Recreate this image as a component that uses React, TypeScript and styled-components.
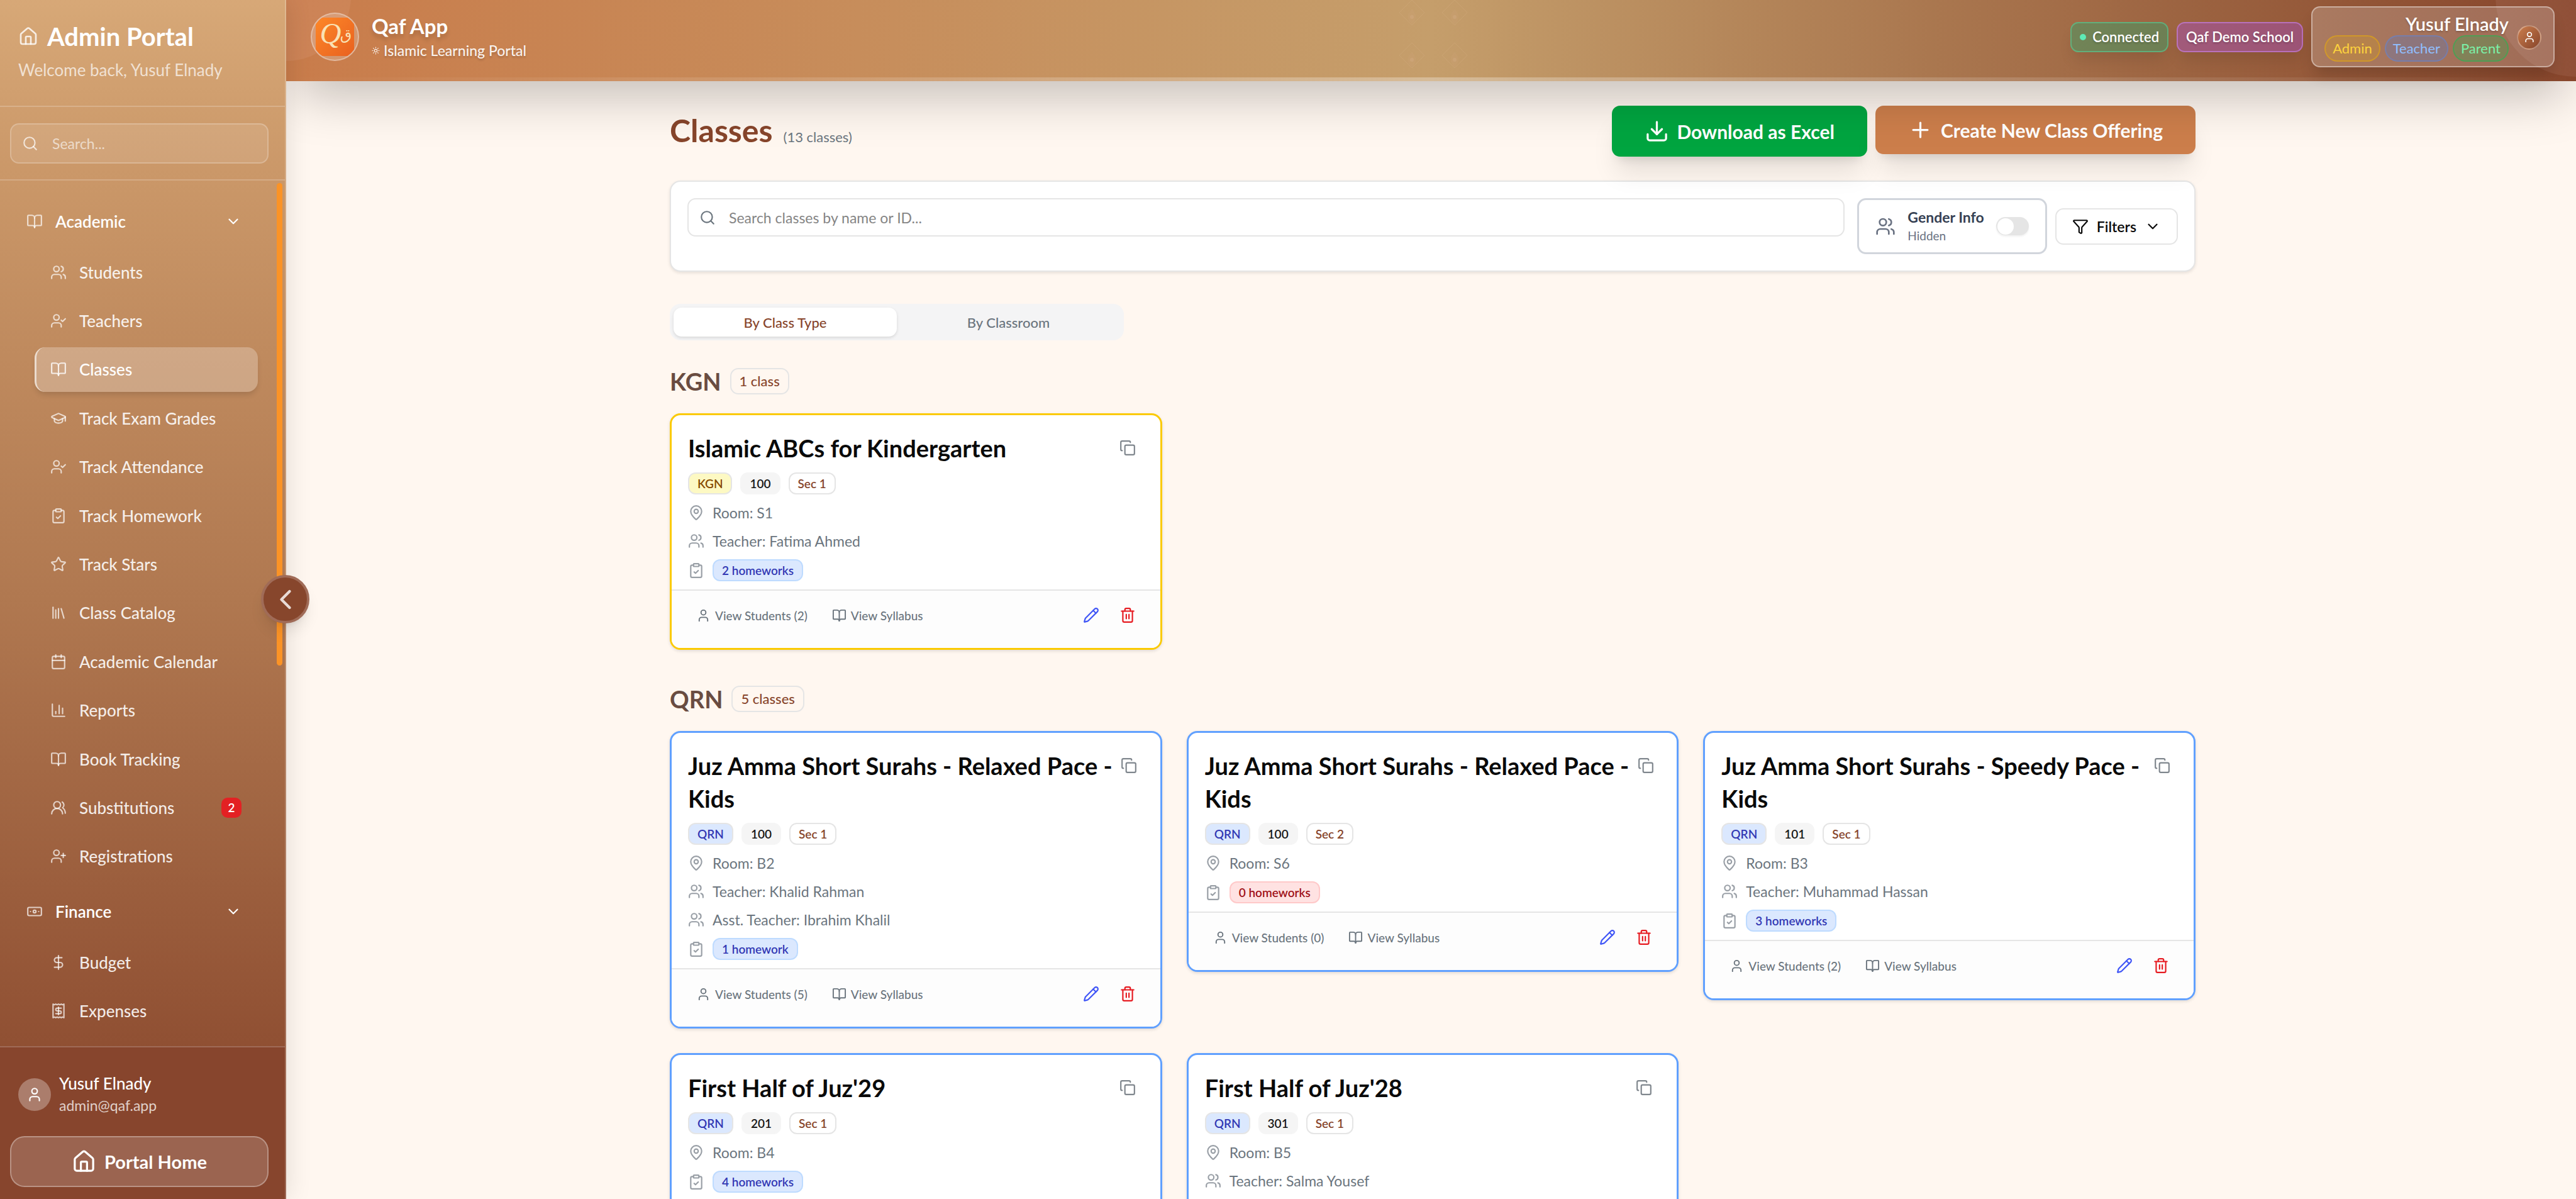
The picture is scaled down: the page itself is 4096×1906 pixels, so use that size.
import React, { useState } from "react";
import styled, { createGlobalStyle } from "styled-components";
import {
  Banknote, BookOpen, Calendar, ChartColumn, ChevronDown, ChevronLeft, ClipboardCheck, Copy,
  DollarSign, Download, Funnel, GraduationCap, House, Library, MapPin, Pencil, Plus, Receipt,
  Search, Star, Sun, Trash2, User, UserCheck, UserPlus, Users, UsersRound,
} from "lucide-react";
import type { LucideIcon } from "lucide-react";

const brown = "#87452b";
const muted = "#6b757e";
const line = "#e5e5e5";

const GlobalStyle = createGlobalStyle`
  *, *::before, *::after { box-sizing: border-box; }
  body {
    margin: 0;
    font-family: Lato, "Liberation Sans", sans-serif;
    font-size: 23px;
    color: #0a0a0a;
    background: #fff7f0;
  }
  h1, h2, h3, p, ul { margin: 0; padding: 0; }
  ul { list-style: none; }
  button, input { font: inherit; color: inherit; }
  button { cursor: pointer; background: none; border: 0; padding: 0; }
  a { color: inherit; text-decoration: none; }
  svg { flex-shrink: 0; }
`;

/* ---------- Shell ---------- */

const Shell = styled.div`
  display: flex;
  height: 100vh;
  overflow: hidden;
`;

const Content = styled.div`
  display: flex;
  flex-direction: column;
  flex: 1;
  min-width: 0;
`;

/* ---------- Sidebar ---------- */

const SidebarFrame = styled.aside`
  position: relative;
  z-index: 3;
  display: flex;
  flex-direction: column;
  flex: 0 0 455px;
  color: #fff;
  border-right: 2px solid rgba(255, 255, 255, 0.2);
  background: linear-gradient(#d7a877, #ca9768 15%, #b07850 50%, #905033 87%, #87452d) border-box;
  box-shadow: 0 0 40px rgba(0, 0, 0, 0.12);
`;

const SidebarHead = styled.header`
  display: flex;
  flex-direction: column;
  gap: 8px;
  padding: 32px 26px 37px 29px;
  border-bottom: 2px solid rgba(255, 255, 255, 0.2);
`;

const PortalTitle = styled.h2`
  display: flex;
  align-items: center;
  gap: 14px;
  font-size: 40px;
  line-height: 52px;
  font-weight: 700;
  svg { color: rgba(255, 255, 255, 0.8); }
`;

const Welcome = styled.p`
  font-size: 26px;
  line-height: 39px;
  color: rgba(255, 255, 255, 0.7);
`;

const SidebarSearch = styled.div`
  padding: 26px 26px 25px 16px;
  border-bottom: 2px solid rgba(255, 255, 255, 0.2);
`;

const SidebarSearchBox = styled.label`
  display: flex;
  align-items: center;
  gap: 22px;
  height: 64px;
  padding: 0 17px;
  border: 2px solid rgba(255, 255, 255, 0.22);
  border-radius: 14px;
  background: rgba(255, 255, 255, 0.1);
  color: rgba(255, 255, 255, 0.7);
`;

const SidebarSearchInput = styled.input`
  flex: 1;
  min-width: 0;
  padding: 0;
  border: 0;
  outline: 0;
  background: transparent;
  font-size: 23px;
  &::placeholder { color: rgba(255, 255, 255, 0.62); opacity: 1; }
`;

const NavArea = styled.div`
  display: flex;
  flex: 1;
  min-height: 0;
  overflow: hidden;
`;

const Nav = styled.nav`
  display: flex;
  flex-direction: column;
  gap: 16px;
  flex: 1;
  padding: 29px 30px 0 16px;
`;

const ScrollThumb = styled.div`
  width: 9px;
  height: 767px;
  margin: 4px 4px 0 0;
  border-radius: 5px;
  background: #fb9326;
`;

const NavGroup = styled.section`
  display: flex;
  flex-direction: column;
  gap: 10px;
`;

const GroupToggle = styled.button`
  display: flex;
  align-items: center;
  gap: 20px;
  height: 71px;
  padding: 0 26px;
  font-size: 26px;
  font-weight: 600;
  color: #fff;
  svg:first-child { color: rgba(255, 255, 255, 0.7); }
  svg:last-child { margin-left: auto; }
`;

const NavList = styled.ul<{ $height?: number }>`
  display: grid;
  grid-auto-rows: minmax(71px, 1fr);
  row-gap: 6px;
  height: ${(p) => (p.$height ? `${p.$height}px` : "auto")};
  padding-left: 39px;
`;

const NavLink = styled.a<{ $active?: boolean }>`
  display: flex;
  align-items: center;
  gap: 20px;
  height: 100%;
  padding: 0 26px 0 22px;
  border-left: 3px solid ${(p) => (p.$active ? "rgba(255,255,255,0.6)" : "transparent")};
  border-radius: 17px;
  font-size: 26px;
  font-weight: 500;
  color: ${(p) => (p.$active ? "#fff" : "rgba(255,255,255,0.9)")};
  background: ${(p) => (p.$active ? "rgba(255,255,255,0.25)" : "transparent")};
  box-shadow: ${(p) => (p.$active ? "0 6px 10px -2px rgba(0,0,0,0.14)" : "none")};
  svg { color: rgba(255, 255, 255, ${(p) => (p.$active ? 0.8 : 0.7)}); }
`;

const NavCount = styled.span`
  display: grid;
  place-items: center;
  width: 32px;
  height: 32px;
  margin-left: auto;
  border-radius: 10px;
  background: #e32123;
  font-size: 19px;
  font-weight: 600;
  color: #fff;
`;

const SidebarFoot = styled.footer`
  display: flex;
  flex-direction: column;
  gap: 31px;
  padding: 40px 26px 19px 16px;
  border-top: 2px solid rgba(255, 255, 255, 0.2);
  background: #87452d;
`;

const Account = styled.div`
  display: flex;
  align-items: center;
  gap: 13px;
  padding-left: 13px;
`;

const AccountAvatar = styled.span`
  display: grid;
  place-items: center;
  width: 52px;
  height: 52px;
  border-radius: 50%;
  background: rgba(255, 255, 255, 0.3);
`;

const AccountName = styled.p`
  font-size: 26px;
  line-height: 35px;
  font-weight: 500;
`;

const AccountMail = styled.p`
  font-size: 23px;
  line-height: 35px;
  color: rgba(255, 255, 255, 0.75);
`;

const HomeButton = styled.button`
  display: flex;
  align-items: center;
  justify-content: center;
  gap: 13px;
  height: 81px;
  border: 2px solid rgba(255, 255, 255, 0.3);
  border-radius: 23px;
  background: rgba(255, 255, 255, 0.17);
  font-size: 29px;
  font-weight: 700;
`;

const CollapseButton = styled.button`
  position: absolute;
  z-index: 4;
  top: 50%;
  right: -39px;
  display: grid;
  place-items: center;
  width: 77px;
  height: 77px;
  margin-top: -39px;
  border: 4px solid #a06b57;
  border-radius: 50%;
  background: #87462c;
  color: #e8dbd6;
  box-shadow: 0 16px 24px -5px rgba(0, 0, 0, 0.1), 0 6px 10px -6px rgba(0, 0, 0, 0.1);
`;

/* ---------- Top bar ---------- */

const TopBar = styled.header`
  position: relative;
  z-index: 2;
  display: flex;
  align-items: center;
  justify-content: space-between;
  padding: 10px 34px 22px 39px;
  color: #fff;
  background: linear-gradient(90deg, #c97c4b, #c59e6b 50%, #87452b);
  box-shadow: 0 40px 80px -19px rgba(0, 0, 0, 0.25);
`;

const BarDecor = styled.div`
  position: absolute;
  inset: 0;
  overflow: hidden;
  pointer-events: none;
`;

const Disc = styled.span<{ $side: "left" | "right"; $size: number }>`
  position: absolute;
  top: -6px;
  ${(p) => p.$side}: 0;
  width: ${(p) => p.$size}px;
  height: ${(p) => p.$size}px;
  border-radius: 50%;
  background: rgba(255, 220, 220, 0.08);
  transform: translate(${(p) => (p.$side === "left" ? "-50%" : "50%")}, -50%);
`;

const DiamondPattern = styled.svg`
  position: absolute;
  top: 0;
  left: 50%;
  margin-left: -52px;
`;

const BarEdge = styled.span`
  position: absolute;
  inset: auto 0 0 0;
  height: 6px;
  background: linear-gradient(90deg, rgba(255, 255, 255, 0), rgba(255, 255, 255, 0.3), rgba(255, 255, 255, 0));
`;

const Brand = styled.div`
  position: relative;
  display: flex;
  align-items: center;
  gap: 20px;
`;

const LogoRing = styled.span`
  display: grid;
  place-items: center;
  width: 77px;
  height: 77px;
  overflow: hidden;
  border: 2px solid rgba(255, 255, 255, 0.32);
  border-radius: 50%;
  background: rgba(255, 255, 255, 0.2);
`;

const BrandText = styled.div`
  padding-top: 4px;
`;

const BrandName = styled.h2`
  font-size: 33px;
  line-height: 39px;
  font-weight: 700;
  text-shadow: 0 6px 6px rgba(0, 0, 0, 0.15);
`;

const BrandTag = styled.p`
  display: flex;
  align-items: center;
  gap: 6px;
  font-size: 23px;
  line-height: 38px;
  font-weight: 500;
  color: rgba(255, 255, 255, 0.92);
  text-shadow: 0 3px 3px rgba(0, 0, 0, 0.15);
`;

const BarActions = styled.div`
  position: relative;
  display: flex;
  align-items: center;
  gap: 13px;
`;

const pillTones = {
  green: "background: rgba(0,188,125,0.3); border-color: rgba(84,220,160,0.5);",
  purple: "background: rgba(173,70,255,0.3); border-color: rgba(210,140,255,0.5);",
};

const StatusPill = styled.span<{ $tone: keyof typeof pillTones }>`
  display: flex;
  align-items: center;
  gap: 10px;
  height: 48px;
  padding: 0 13px;
  border: 2px solid;
  border-radius: 13px;
  font-size: 22px;
  font-weight: 600;
  text-shadow: 0 2px 3px rgba(0, 0, 0, 0.2);
  box-shadow: 0 16px 24px -5px rgba(0, 0, 0, 0.1);
  ${(p) => pillTones[p.$tone]}
`;

const Dot = styled.i`
  width: 10px;
  height: 10px;
  border-radius: 50%;
  background: #5eeab5;
`;

const UserCard = styled.button`
  display: flex;
  align-items: center;
  gap: 13px;
  padding: 8px 19px 7px;
  border: 2px solid rgba(255, 255, 255, 0.4);
  border-radius: 14px;
  background: rgba(255, 255, 255, 0.2);
  color: #fff;
  box-shadow: 0 16px 24px -5px rgba(0, 0, 0, 0.16);
`;

const UserInfo = styled.span`
  display: flex;
  flex-direction: column;
  align-items: flex-end;
`;

const UserName = styled.strong`
  font-size: 29px;
  line-height: 36px;
  font-weight: 600;
  text-shadow: 0 2px 3px rgba(0, 0, 0, 0.2);
`;

const Roles = styled.span`
  display: flex;
  gap: 7px;
`;

const roleTones = {
  yellow: "color: #fdd33d; background: rgba(240,177,0,0.2); border-color: rgba(240,177,0,0.45);",
  blue: "color: #90bfff; background: rgba(43,127,255,0.2); border-color: rgba(80,140,255,0.35);",
  green: "color: #7bf1a8; background: rgba(0,201,80,0.2); border-color: rgba(0,201,80,0.4);",
};

const Role = styled.span<{ $tone: keyof typeof roleTones }>`
  height: 42px;
  padding: 0 11px;
  border: 2px solid;
  border-radius: 21px;
  font-size: 22px;
  line-height: 38px;
  ${(p) => roleTones[p.$tone]}
`;

const UserAvatar = styled.span`
  display: grid;
  place-items: center;
  width: 39px;
  height: 39px;
  border: 2px solid rgba(255, 255, 255, 0.35);
  border-radius: 50%;
  background: linear-gradient(135deg, #cb7d4c, #87452b);
`;

/* ---------- Page ---------- */

const Main = styled.main`
  flex: 1;
  min-height: 0;
  overflow: hidden;
  padding: 39px 25px 0 30px;
`;

const Page = styled.div`
  max-width: 2426px;
  margin: 0 auto;
`;

const PageHead = styled.div`
  display: flex;
  align-items: center;
  justify-content: space-between;
`;

const PageTitle = styled.h1`
  display: flex;
  align-items: baseline;
  gap: 17px;
  padding-top: 8px;
  font-size: 50px;
  line-height: 60px;
  font-weight: 700;
  color: ${brown};
`;

const TitleNote = styled.span`
  font-size: 22px;
  font-weight: 400;
  color: ${muted};
`;

const PageActions = styled.div`
  display: flex;
  align-items: flex-start;
  gap: 13px;
`;

const ActionButton = styled.button<{ $tone: "green" | "copper" }>`
  display: flex;
  align-items: center;
  gap: 13px;
  height: ${(p) => (p.$tone === "green" ? 81 : 77)}px;
  padding: 0 52px;
  border-radius: 13px;
  font-size: 30px;
  font-weight: 700;
  color: #fff;
  background: ${(p) => (p.$tone === "green" ? "#00a540" : "#cc7e4b")};
  box-shadow: 0 32px 40px -8px rgba(0, 0, 0, 0.1), 0 13px 16px -10px rgba(0, 0, 0, 0.12);
`;

const FilterCard = styled.section`
  display: flex;
  align-items: flex-start;
  margin-top: 38px;
  padding: 26px;
  border: 2px solid ${line};
  border-radius: 17px;
  background: #fff;
  box-shadow: 0 2px 5px rgba(0, 0, 0, 0.1);
`;

const SearchBox = styled.label`
  display: flex;
  align-items: center;
  gap: 21px;
  flex: 1;
  height: 61px;
  margin-right: 20px;
  padding: 0 17px;
  border: 2px solid ${line};
  border-radius: 13px;
  color: ${muted};
`;

const SearchInput = styled.input`
  flex: 1;
  min-width: 0;
  padding: 0;
  border: 0;
  outline: 0;
  background: transparent;
  font-size: 23px;
  color: #0a0a0a;
  &::placeholder { color: #858585; opacity: 1; }
`;

const FilterControls = styled.div`
  display: flex;
  align-items: center;
  gap: 13px;
`;

const GenderToggle = styled.label`
  display: flex;
  align-items: center;
  gap: 19px;
  height: 89px;
  padding: 0 26px;
  border: 3px solid #d1d5dc;
  border-radius: 14px;
  color: #6a7282;
`;

const GenderText = styled.span`
  display: flex;
  flex-direction: column;
  font-size: 19px;
  line-height: 29px;
  strong {
    font-size: 23px;
    font-weight: 700;
    color: #364153;
  }
`;

const Switch = styled.input`
  appearance: none;
  display: flex;
  align-items: center;
  width: 52px;
  height: 29px;
  margin: 0;
  padding: 0 2px;
  border-radius: 15px;
  background: ${line};
  box-shadow: 0 2px 3px rgba(0, 0, 0, 0.06);
  &::before {
    content: "";
    width: 26px;
    height: 26px;
    border-radius: 50%;
    background: #fff;
  }
  &:checked { justify-content: flex-end; background: #cc7e4b; }
`;

const FiltersButton = styled.button`
  display: flex;
  align-items: center;
  gap: 13px;
  height: 58px;
  padding: 0 25px;
  border: 2px solid ${line};
  border-radius: 13px;
  font-size: 23px;
  font-weight: 600;
`;

const Tabs = styled.div`
  display: flex;
  max-width: 722px;
  margin-top: 51px;
  padding: 6px;
  border-radius: 17px;
  background: #f4f4f5;
`;

const Tab = styled.button<{ $active: boolean }>`
  flex: 1;
  height: 46px;
  border-radius: 13px;
  font-size: 22px;
  font-weight: 500;
  color: ${(p) => (p.$active ? brown : muted)};
  background: ${(p) => (p.$active ? "#fff" : "transparent")};
  box-shadow: ${(p) => (p.$active ? "0 2px 5px rgba(0,0,0,0.12)" : "none")};
`;

const Group = styled.section`
  margin-top: 39px;
  & + & { margin-top: 52px; }
`;

const GroupTitle = styled.h2`
  display: flex;
  align-items: center;
  gap: 14px;
  height: 51px;
  margin-bottom: 26px;
  font-size: 38px;
  font-weight: 700;
  color: #694c41;
`;

const CountBadge = styled.span`
  height: 42px;
  padding: 0 13px;
  border: 2px solid ${line};
  border-radius: 13px;
  font-size: 22px;
  line-height: 38px;
  font-weight: 500;
  color: ${brown};
`;

const CardGrid = styled.div`
  display: grid;
  grid-template-columns: repeat(3, 1fr);
  align-items: start;
  gap: 39px;
`;

const Card = styled.article<{ $color: string }>`
  overflow: hidden;
  border: 3px solid ${(p) => p.$color};
  border-radius: 17px;
  background: #fff;
  box-shadow: 0 2px 5px rgba(0, 0, 0, 0.12);
`;

const CardBody = styled.div`
  display: flex;
  flex-direction: column;
  gap: 13px;
  padding: 26px 26px 13px;
`;

const CardHead = styled.div`
  display: flex;
  align-items: flex-start;
  justify-content: space-between;
`;

const CardTitle = styled.h3`
  font-size: 38px;
  line-height: 52px;
  font-weight: 700;
`;

const IconButton = styled.button<{ $color: string }>`
  display: flex;
  align-items: center;
  justify-content: center;
  width: 52px;
  height: 52px;
  color: ${(p) => p.$color};
`;

const BadgeRow = styled.div`
  display: flex;
  gap: 13px;
`;

const badgeTones = {
  yellow: `background: #fdf9c3; border-color: ${line}; color: #874b00;`,
  blue: `background: #dbe8fe; border-color: ${line}; color: #3238b4;`,
  gray: "background: #f5f5f5; border-color: #f5f5f5; color: #171717;",
  plain: `background: #fff; border-color: ${line}; color: ${brown};`,
  homework: "background: #dbe8fe; border-color: #bedbff; color: #3238b4;",
  alert: "background: #ffe2e2; border-color: #ffc9c9; color: #9f1118;",
};

const Badge = styled.span<{ $tone: keyof typeof badgeTones }>`
  height: 35px;
  padding: 0 13px;
  border: 2px solid;
  border-radius: 12px;
  font-size: 19px;
  line-height: 31px;
  font-weight: 600;
  ${(p) => badgeTones[p.$tone]}
`;

const Detail = styled.p`
  display: flex;
  align-items: center;
  gap: 13px;
  min-height: 32px;
  color: ${muted};
  svg { color: #999fa6; }
`;

const CardFoot = styled.footer`
  display: flex;
  align-items: center;
  justify-content: space-between;
  padding: 13px 26px 26px;
  border-top: 2px solid ${line};
  background: #fdfdfd;
`;

const FootLinks = styled.div`
  display: flex;
  gap: 13px;
`;

const FootIcons = styled.div`
  display: flex;
  gap: 6px;
`;

const GhostButton = styled.button`
  display: flex;
  align-items: center;
  gap: 7px;
  height: 52px;
  padding: 0 13px;
  font-size: 19px;
  font-weight: 500;
  color: ${muted};
`;

/* ---------- Data ---------- */

type NavEntry = { label: string; icon: LucideIcon; active?: boolean; count?: number };

const academic: NavEntry[] = [
  { label: "Students", icon: Users },
  { label: "Teachers", icon: UserCheck },
  { label: "Classes", icon: BookOpen, active: true },
  { label: "Track Exam Grades", icon: GraduationCap },
  { label: "Track Attendance", icon: UserCheck },
  { label: "Track Homework", icon: ClipboardCheck },
  { label: "Track Stars", icon: Star },
  { label: "Class Catalog", icon: Library },
  { label: "Academic Calendar", icon: Calendar },
  { label: "Reports", icon: ChartColumn },
  { label: "Book Tracking", icon: BookOpen },
  { label: "Substitutions", icon: UsersRound, count: 2 },
  { label: "Registrations", icon: UserPlus },
];

const finance: NavEntry[] = [
  { label: "Budget", icon: DollarSign },
  { label: "Expenses", icon: Receipt },
];

type ClassInfo = {
  title: string;
  code: string;
  section: number;
  room: string;
  teacher?: string;
  assistant?: string;
  homeworks: number;
  students: number;
};

type ClassGroup = { type: string; total: string; color: string; tone: "yellow" | "blue"; classes: ClassInfo[] };

const groups: ClassGroup[] = [
  {
    type: "KGN", total: "1 class", color: "#fbca00", tone: "yellow",
    classes: [
      { title: "Islamic ABCs for Kindergarten", code: "100", section: 1, room: "S1", teacher: "Fatima Ahmed", homeworks: 2, students: 2 },
    ],
  },
  {
    type: "QRN", total: "5 classes", color: "#60a0ff", tone: "blue",
    classes: [
      { title: "Juz Amma Short Surahs - Relaxed Pace - Kids", code: "100", section: 1, room: "B2", teacher: "Khalid Rahman", assistant: "Ibrahim Khalil", homeworks: 1, students: 5 },
      { title: "Juz Amma Short Surahs - Relaxed Pace - Kids", code: "100", section: 2, room: "S6", homeworks: 0, students: 0 },
      { title: "Juz Amma Short Surahs - Speedy Pace - Kids", code: "101", section: 1, room: "B3", teacher: "Muhammad Hassan", homeworks: 3, students: 2 },
      { title: "First Half of Juz'29", code: "201", section: 1, room: "B4", homeworks: 4, students: 3 },
      { title: "First Half of Juz'28", code: "301", section: 1, room: "B5", teacher: "Salma Yousef", homeworks: 2, students: 3 },
    ],
  },
];

/* ---------- Parts ---------- */

function Logo() {
  return (
    <svg width="61" height="61" viewBox="0 0 74 74" role="img" aria-label="Qaf App logo">
      <defs>
        <linearGradient id="logo-fill" x1="0" y1="0" x2="1" y2="1">
          <stop offset="0" stopColor="#fd8728" />
          <stop offset="1" stopColor="#e9611f" />
        </linearGradient>
      </defs>
      <rect width="74" height="74" fill="url(#logo-fill)" />
      <text x="8" y="50" fontFamily="Liberation Serif, serif" fontStyle="italic" fontSize="57" fill="#f9e2b5">Q</text>
      <text x="47" y="42" fontFamily="DejaVu Sans, sans-serif" fontSize="29" fill="#f9e2b5">ق</text>
    </svg>
  );
}

function Diamond({ x, y }: { x: number; y: number }) {
  return (
    <g transform={`translate(${x} ${y})`}>
      <path d="M20 0 40 20 20 40 0 20Z" fill="none" stroke="rgba(255,215,190,0.1)" />
      <path d="M20 14C24 21 32 26 20 39 8 26 16 21 20 14Z" fill="rgba(255,215,200,0.04)" />
      <ellipse cx="20" cy="27" rx="3" ry="3" fill="rgba(255,220,210,0.1)" />
    </g>
  );
}

function NavItems({ items, height }: { items: NavEntry[]; height?: number }) {
  return (
    <NavList $height={height}>
      {items.map(({ label, icon: Icon, active, count }) => (
        <li key={label}>
          <NavLink href="#" $active={active} aria-current={active ? "page" : undefined}>
            <Icon size={26} />
            {label}
            {count !== undefined && <NavCount>{count}</NavCount>}
          </NavLink>
        </li>
      ))}
    </NavList>
  );
}

function Sidebar() {
  return (
    <SidebarFrame>
      <SidebarHead>
        <PortalTitle><House size={32} />Admin Portal</PortalTitle>
        <Welcome>Welcome back, Yusuf Elnady</Welcome>
      </SidebarHead>
      <SidebarSearch>
        <SidebarSearchBox>
          <Search size={26} />
          <SidebarSearchInput type="text" placeholder="Search..." aria-label="Search" />
        </SidebarSearchBox>
      </SidebarSearch>
      <NavArea>
        <Nav>
          <NavGroup>
            <GroupToggle><BookOpen size={26} />Academic<ChevronDown size={26} /></GroupToggle>
            <NavItems items={academic} height={1000} />
          </NavGroup>
          <NavGroup>
            <GroupToggle><Banknote size={26} />Finance<ChevronDown size={26} /></GroupToggle>
            <NavItems items={finance} />
          </NavGroup>
        </Nav>
        <ScrollThumb />
      </NavArea>
      <SidebarFoot>
        <Account>
          <AccountAvatar><User size={26} /></AccountAvatar>
          <div>
            <AccountName>Yusuf Elnady</AccountName>
            <AccountMail>admin@qaf.app</AccountMail>
          </div>
        </Account>
        <HomeButton><House size={39} />Portal Home</HomeButton>
      </SidebarFoot>
      <CollapseButton aria-label="Collapse sidebar"><ChevronLeft size={52} /></CollapseButton>
    </SidebarFrame>
  );
}

function Header() {
  return (
    <TopBar>
      <BarDecor>
        <Disc $side="left" $size={206} />
        <Disc $side="right" $size={256} />
        <DiamondPattern width="110" height="110" viewBox="0 0 110 110">
          <Diamond x={1} y={0} />
          <Diamond x={69} y={0} />
          <Diamond x={1} y={68} />
          <Diamond x={69} y={68} />
        </DiamondPattern>
        <BarEdge />
      </BarDecor>
      <Brand>
        <LogoRing><Logo /></LogoRing>
        <BrandText>
          <BrandName>Qaf App</BrandName>
          <BrandTag><Sun size={13} />Islamic Learning Portal</BrandTag>
        </BrandText>
      </Brand>
      <BarActions>
        <StatusPill $tone="green"><Dot />Connected</StatusPill>
        <StatusPill $tone="purple">Qaf Demo School</StatusPill>
        <UserCard>
          <UserInfo>
            <UserName>Yusuf Elnady</UserName>
            <Roles>
              <Role $tone="yellow">Admin</Role>
              <Role $tone="blue">Teacher</Role>
              <Role $tone="green">Parent</Role>
            </Roles>
          </UserInfo>
          <UserAvatar><User size={20} /></UserAvatar>
        </UserCard>
      </BarActions>
    </TopBar>
  );
}

function ClassCard({ group, info }: { group: ClassGroup; info: ClassInfo }) {
  return (
    <Card $color={group.color}>
      <CardBody>
        <CardHead>
          <CardTitle>{info.title}</CardTitle>
          <IconButton $color="#7f868d" aria-label="Duplicate class"><Copy size={26} /></IconButton>
        </CardHead>
        <BadgeRow>
          <Badge $tone={group.tone}>{group.type}</Badge>
          <Badge $tone="gray">{info.code}</Badge>
          <Badge $tone="plain">Sec {info.section}</Badge>
        </BadgeRow>
        <Detail><MapPin size={26} />Room: {info.room}</Detail>
        {info.teacher && <Detail><Users size={26} />Teacher: {info.teacher}</Detail>}
        {info.assistant && <Detail><Users size={26} />Asst. Teacher: {info.assistant}</Detail>}
        <Detail>
          <ClipboardCheck size={26} />
          <Badge $tone={info.homeworks ? "homework" : "alert"}>
            {info.homeworks} {info.homeworks === 1 ? "homework" : "homeworks"}
          </Badge>
        </Detail>
      </CardBody>
      <CardFoot>
        <FootLinks>
          <GhostButton><User size={23} />View Students ({info.students})</GhostButton>
          <GhostButton><BookOpen size={23} />View Syllabus</GhostButton>
        </FootLinks>
        <FootIcons>
          <IconButton $color="#3f55f6" aria-label="Edit class"><Pencil size={26} /></IconButton>
          <IconButton $color="#e61a20" aria-label="Delete class"><Trash2 size={26} /></IconButton>
        </FootIcons>
      </CardFoot>
    </Card>
  );
}

export default function App() {
  const [tab, setTab] = useState("type");
  return (
    <>
      <GlobalStyle />
      <Shell>
        <Sidebar />
        <Content>
          <Header />
          <Main>
            <Page>
              <PageHead>
                <PageTitle>Classes<TitleNote>(13 classes)</TitleNote></PageTitle>
                <PageActions>
                  <ActionButton $tone="green"><Download size={39} />Download as Excel</ActionButton>
                  <ActionButton $tone="copper"><Plus size={39} />Create New Class Offering</ActionButton>
                </PageActions>
              </PageHead>
              <FilterCard>
                <SearchBox>
                  <Search size={26} />
                  <SearchInput type="text" placeholder="Search classes by name or ID..." aria-label="Search classes" />
                </SearchBox>
                <FilterControls>
                  <GenderToggle>
                    <Users size={32} />
                    <GenderText><strong>Gender Info</strong>Hidden</GenderText>
                    <Switch type="checkbox" role="switch" />
                  </GenderToggle>
                  <FiltersButton><Funnel size={26} />Filters<ChevronDown size={26} /></FiltersButton>
                </FilterControls>
              </FilterCard>
              <Tabs role="tablist">
                <Tab role="tab" aria-selected={tab === "type"} $active={tab === "type"} onClick={() => setTab("type")}>By Class Type</Tab>
                <Tab role="tab" aria-selected={tab === "room"} $active={tab === "room"} onClick={() => setTab("room")}>By Classroom</Tab>
              </Tabs>
              {groups.map((group) => (
                <Group key={group.type}>
                  <GroupTitle>{group.type}<CountBadge>{group.total}</CountBadge></GroupTitle>
                  <CardGrid>
                    {group.classes.map((info, i) => <ClassCard key={i} group={group} info={info} />)}
                  </CardGrid>
                </Group>
              ))}
            </Page>
          </Main>
        </Content>
      </Shell>
    </>
  );
}
